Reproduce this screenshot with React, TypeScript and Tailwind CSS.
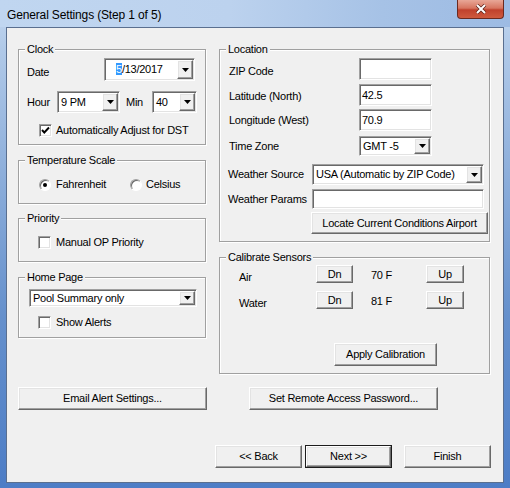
import React from 'react';

const raised =
  'bg-[#f0f0f0] border border-t-white border-l-white border-r-[#696969] border-b-[#696969] shadow-[inset_-1px_-1px_0_#a0a0a0,inset_1px_1px_0_#e3e3e3]';
const sunken =
  'bg-white border border-t-[#a0a0a0] border-l-[#a0a0a0] border-r-white border-b-white shadow-[inset_1px_1px_0_#696969,inset_-1px_-1px_0_#e3e3e3]';

function Tri() {
  return (
    <svg width="7" height="4" viewBox="0 0 7 4">
      <path d="M0 0h7L3.5 4z" fill="#000" />
    </svg>
  );
}

function GroupBox({ title, className, children }: { title: string; className: string; children?: React.ReactNode }) {
  return (
    <div className={`relative border border-[#a0a0a0] shadow-[inset_1px_1px_0_#fff,1px_1px_0_#fff] ${className}`}>
      <span className="absolute top-[-7px] left-[6px] bg-[#f0f0f0] px-[2px] leading-[13px]">{title}</span>
      {children}
    </div>
  );
}

function Button({ label, className }: { label: string; className: string }) {
  return <div className={`${raised} flex items-center justify-center ${className}`}>{label}</div>;
}

function Combo({ value, className, pad = 'pl-[2px]' }: { value: React.ReactNode; className: string; pad?: string }) {
  return (
    <div className={`${sunken} flex p-[1px] ${className}`}>
      <div className={`flex flex-1 items-center ${pad}`}>{value}</div>
      <div className={`${raised} flex w-[16px] items-center justify-center`}>
        <Tri />
      </div>
    </div>
  );
}

function Input({ value, className }: { value?: string; className: string }) {
  return <div className={`${sunken} flex items-center pl-[2px] ${className}`}>{value}</div>;
}

function Check({ checked }: { checked?: boolean }) {
  return (
    <div className={`${sunken} h-[13px] w-[13px] shrink-0`}>
      {checked && (
        <svg width="11" height="11" viewBox="0 0 11 11">
          <polyline points="2,5 4.3,7.5 9,2.5" fill="none" stroke="#000" strokeWidth="1.9" />
        </svg>
      )}
    </div>
  );
}

function Radio({ checked }: { checked?: boolean }) {
  return (
    <div className="flex h-[12px] w-[12px] shrink-0 items-center justify-center rounded-full border border-t-[#a0a0a0] border-l-[#a0a0a0] border-r-white border-b-white bg-white shadow-[inset_1px_1px_0_#696969]">
      {checked && <div className="h-[4px] w-[4px] rounded-full bg-black" />}
    </div>
  );
}

export default function App() {
  return (
    <div className="flex h-[488px] w-[510px] flex-col bg-[linear-gradient(180deg,#c4d8f0_0%,#b0c9e8_10%,#8eafdb_35%,#6590cc_65%,#4d7dc6_100%)] font-['Liberation_Sans',Arial,sans-serif] text-[11px] leading-[13px] tracking-[-0.25px] text-black">
      {/* title bar */}
      <div className="flex h-[27px] shrink-0 items-start bg-[linear-gradient(90deg,#c0d6f0_0%,#bcd2ee_45%,#a6c2e6_75%,#9dbbe3_100%)]">
        <span className="ml-[7px] mt-[8px] text-[12px] leading-[14px] tracking-[-0.15px]">General Settings (Step 1 of 5)</span>
        <div className="ml-auto mr-[6px] flex h-[19px] w-[47px] items-center justify-center rounded-b-[4px] border border-t-0 border-[#6b2a20] bg-[linear-gradient(180deg,#e8a797_0%,#d77560_45%,#c0412c_55%,#cf5a3e_100%)]">
          <svg width="12" height="10" viewBox="0 0 12 10">
            <path d="M2 1l8 8M10 1L2 9" stroke="#5a2018" strokeWidth="3.4" />
            <path d="M2 1l8 8M10 1L2 9" stroke="#fff" strokeWidth="2" />
          </svg>
        </div>
      </div>

      {/* client area */}
      <div className="mx-[6px] h-[456px] shrink-0 border border-[#5a6f8f] bg-[#f0f0f0] pl-[11px] pt-[21px]">
        <div className="flex items-start">
          {/* left column */}
          <div className="flex w-[188px] flex-col">
            <GroupBox title="Clock" className="h-[96px]">
              <div className="flex items-center pl-[8px] pr-[10px] pt-[8px]">
                <span className="translate-y-[3px]">Date</span>
                <Combo
                  className="ml-auto h-[23px] w-[91px]"
                  pad="pl-[10px]"
                  value={
                    <span>
                      <span className="bg-[#3399ff] text-white">5</span>/13/2017
                    </span>
                  }
                />
              </div>
              <div className="mt-[10px] flex items-center pl-[8px]">
                <span className="w-[30px]">Hour</span>
                <Combo className="h-[22px] w-[63px]" value="9 PM" />
                <span className="ml-[6px] w-[26px]">Min</span>
                <Combo className="h-[22px] w-[45px]" value="40" />
              </div>
              <div className="mt-[11px] flex items-center pl-[20px]">
                <Check checked />
                <span className="ml-[4px]">Automatically Adjust for DST</span>
              </div>
            </GroupBox>

            <GroupBox title="Temperature Scale" className="mt-[15px] h-[44px]">
              <div className="flex items-center pl-[20px] pt-[17px]">
                <div className="flex w-[91px] items-center">
                  <Radio checked />
                  <span className="ml-[5px]">Fahrenheit</span>
                </div>
                <Radio />
                <span className="ml-[4px]">Celsius</span>
              </div>
            </GroupBox>

            <GroupBox title="Priority" className="mt-[14px] h-[44px]">
              <div className="flex items-center pl-[19px] pt-[17px]">
                <Check />
                <span className="ml-[5px]">Manual OP Priority</span>
              </div>
            </GroupBox>

            <GroupBox title="Home Page" className="mt-[15px] h-[61px]">
              <div className="pl-[10px] pt-[11px]">
                <Combo className="h-[18px] w-[168px]" value="Pool Summary only" />
              </div>
              <div className="mt-[9px] flex items-center pl-[19px]">
                <Check />
                <span className="ml-[5px]">Show Alerts</span>
              </div>
            </GroupBox>
          </div>

          {/* right column */}
          <div className="ml-[13px] flex w-[271px] flex-col">
            <GroupBox title="Location" className="h-[193px]">
              <div className="flex items-center pl-[9px] pt-[8px]">
                <span className="w-[130px] translate-y-[2px]">ZIP Code</span>
                <Input className="h-[22px] w-[73px]" />
              </div>
              <div className="mt-[4px] flex items-center pl-[9px]">
                <span className="w-[130px] translate-y-[1px]">Latitude (North)</span>
                <Input className="h-[22px] w-[73px]" value="42.5" />
              </div>
              <div className="mt-[3px] flex items-center pl-[9px]">
                <span className="w-[130px]">Longitude (West)</span>
                <Input className="h-[22px] w-[73px]" value="70.9" />
              </div>
              <div className="mt-[5px] flex items-center pl-[9px]">
                <span className="w-[130px]">Time Zone</span>
                <Combo className="h-[20px] w-[73px]" value="GMT -5" />
              </div>
              <div className="mt-[8px] flex items-center pl-[8px]">
                <span className="w-[84px]">Weather Source</span>
                <Combo className="h-[21px] w-[172px]" value="USA (Automatic by ZIP Code)" />
              </div>
              <div className="mt-[4px] flex items-center pl-[8px]">
                <span className="w-[84px]">Weather Params</span>
                <Input className="h-[20px] w-[172px]" />
              </div>
              <Button label="Locate Current Conditions Airport" className="ml-[91px] mt-[3px] h-[22px] w-[177px]" />
            </GroupBox>

            <GroupBox title="Calibrate Sensors" className="mt-[15px] h-[117px]">
              <div className="flex h-[18px] items-center pl-[19px] mt-[7px]">
                <span className="w-[77px] translate-y-[3px]">Air</span>
                <Button label="Dn" className="h-[18px] w-[37px]" />
                <span className="ml-[18px] w-[55px] translate-y-[1px]">70 F</span>
                <Button label="Up" className="h-[18px] w-[38px]" />
              </div>
              <div className="mt-[8px] flex h-[18px] items-center pl-[19px]">
                <span className="w-[77px] translate-y-[3px]">Water</span>
                <Button label="Dn" className="h-[18px] w-[37px]" />
                <span className="ml-[18px] w-[55px] translate-y-[1px]">81 F</span>
                <Button label="Up" className="h-[18px] w-[38px]" />
              </div>
              <Button label="Apply Calibration" className="ml-[114px] mt-[34px] h-[23px] w-[103px]" />
            </GroupBox>
          </div>
        </div>

        <div className="mt-[13px] flex">
          <Button label="Email Alert Settings..." className="h-[23px] w-[189px]" />
          <Button label="Set Remote Access Password..." className="ml-[42px] h-[23px] w-[189px]" />
        </div>

        <div className="ml-[197px] mt-[35px] flex">
          <Button label="<< Back" className="h-[23px] w-[87px]" />
          <div className="ml-[3px] flex h-[23px] w-[87px] border border-[#1c1c1c]">
            <Button label="Next >>" className="flex-1" />
          </div>
          <Button label="Finish" className="ml-[12px] h-[23px] w-[87px]" />
        </div>
      </div>
    </div>
  );
}
